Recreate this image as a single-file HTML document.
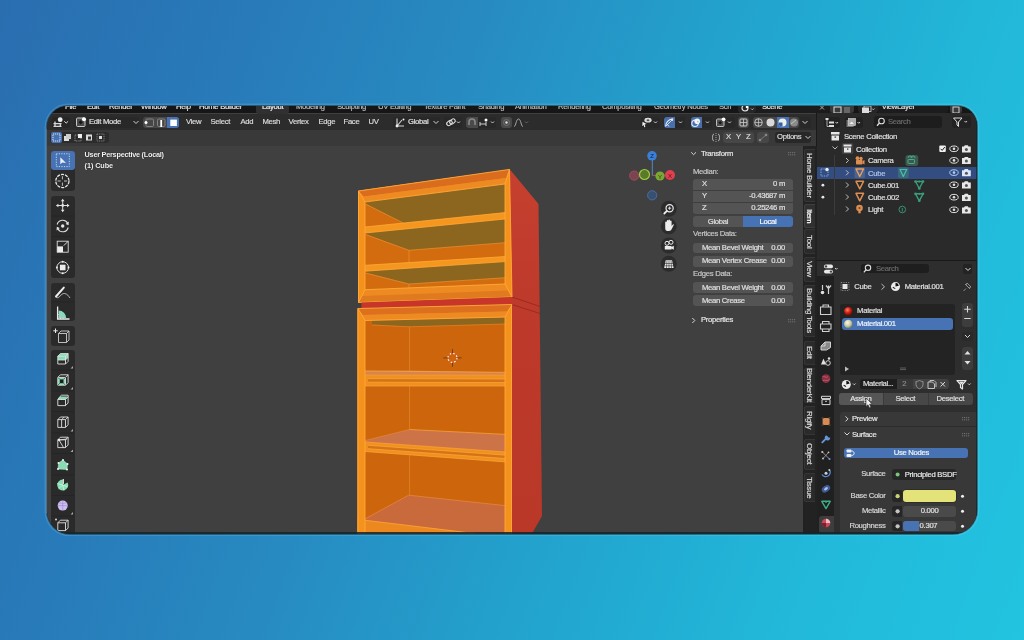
<!DOCTYPE html>
<html><head><meta charset="utf-8">
<style>
*{margin:0;padding:0;box-sizing:border-box}
html,body{width:1024px;height:640px;overflow:hidden}
body{background:linear-gradient(110deg,#2a6eb0 0%,#287ab8 20%,#278cc2 40%,#22a4ce 60%,#22b8da 80%,#22c4e0 100%);font-family:"Liberation Sans",sans-serif;color:#d8d8d8;position:relative}
#win{position:absolute;left:47px;top:106px;width:930px;height:427.5px;border-radius:21px 20px 24px 23px;overflow:hidden;background:#1a1a1a;box-shadow:0 0 0 1px rgba(8,24,32,.45),0 0 0 2.5px rgba(150,215,245,.2);will-change:transform}
#in{position:absolute;left:-47px;top:-106px;width:1024px;height:640px}
.a{position:absolute}
.vt{position:absolute;writing-mode:vertical-rl;font-size:7.9px;line-height:11px;text-align:center;color:#d8d8d8;white-space:nowrap;letter-spacing:-0.25px;-webkit-text-stroke:0.2px currentColor}
.t{position:absolute;white-space:nowrap;font-size:7.7px;line-height:10px;letter-spacing:-0.3px;-webkit-text-stroke:0.18px currentColor}
</style></head><body>
<div class="a" style="left:46px;top:129px;width:1.2px;height:384px;background:rgba(190,215,240,.6)"></div>
<div id="win"><div id="in">
  <!-- menu bar -->
  <div class="a" style="left:0;top:0;width:1024px;height:114px;background:#161616"></div>
  <!-- viewport -->
  <div class="a" style="left:47px;top:113px;width:769px;height:421px;background:#404040"></div>
  <div class="a" style="left:47px;top:114px;width:769px;height:16px;background:#2c2c2c"></div>
  <div class="a" style="left:47px;top:130px;width:769px;height:16px;background:#393939"></div>
<svg class="a" style="left:0;top:0" width="1024" height="640" viewBox="0 0 1024 640">
 <!-- red side -->
 <defs><linearGradient id="redg" x1="0" y1="169" x2="0" y2="533" gradientUnits="userSpaceOnUse"><stop offset="0" stop-color="#c6402f"/><stop offset="0.35" stop-color="#be3a2b"/><stop offset="1" stop-color="#b93828"/></linearGradient></defs>
 <polygon points="509.5,169 538.5,204 542,516 532,533.5 511,533.5 511,296" fill="url(#redg)"/>
 <path d="M512 297 L540 306.5 M512 304.5 L540 313.5" stroke="#962820" stroke-width="0.9"/>
 <!-- ===== upper box ===== -->
 <polygon points="358,190.8 509.5,169.4 512,297 358,302.5" fill="#f08c1e"/>
 <!-- top board face -->
 <polygon points="358,190.8 509.5,169.4 506,178 364,196.5" fill="#da6c1e"/>
 <polygon points="364,196.5 506,178 505,184 365,202" fill="#ee8a22"/>
 <!-- interior -->
 <polygon points="365,202 505,184 505,284 365,290" fill="#d26c0e"/>
 <polygon points="365,202 505,184 505,213 404,223.4 365,203.5" fill="#8c661e"/>
 <polygon points="365,232.8 505,218.6 505,242.7 409,250.3 365,234" fill="#8c661e"/>
 <polygon points="365,271 505,261 505,277.7 409,284 365,272.5" fill="#8c661e"/>
 <path d="M365.5 204 L404 223.4 M365.5 234.5 L409 250.3 L505 242.7 M365.5 273 L409 284 L505 277.7 M409 250.3 V266 M409 284 V289" stroke="#eb9030" stroke-width="0.7" fill="none"/>
 <!-- shelves -->
 <polygon points="365,227 505,212.6 505,219 365,233" fill="#f5961e"/>
 <polygon points="365,265.3 505,256.6 505,261.6 365,271.2" fill="#f5961e"/>
 <path d="M365 227 L505 212.6 M365 233 L505 219 M365 265.3 L505 256.6 M365 271.2 L505 261.6" stroke="#ffa838" stroke-width="0.8"/>
 <!-- bottom board -->
 <polygon points="365,289.7 505,284 512,297 358,302.5" fill="#ee8a22"/>
 <polygon points="362,296 508,290.5 512,297 358,302.5" fill="#e07a1e"/>
 <!-- posts -->
 <polygon points="358,190.8 365,202 365,290 358,302.5" fill="#f5921e"/>
 <polygon points="505,184 509.5,169.4 512,297 505,284" fill="#f5921e"/>
 <path d="M358.5 191 L509.5 169.4 L512 297 L358.5 302.5 Z M365 202 L505 184 L505 284 L365 289.7 Z M358.5 191 L365 202 M509.5 169.4 L505 184 M505 284 L512 297 M365 289.7 L358.5 302.5" stroke="#ffa838" stroke-width="0.9" fill="none"/>
 <!-- red strip -->
 <polygon points="361.4,302.5 512,297 512,304.5 361.4,308.3" fill="#c8362a"/>
 <!-- ===== lower box ===== -->
 <polygon points="357.5,308.5 512,304.5 512,533.5 357.5,533.5" fill="#f08c1e"/>
 <polygon points="365,320.5 505,317 505,533.5 365,533.5" fill="#cc650c"/>
 <polygon points="357.5,308.5 512,304.5 507,311.5 363,315" fill="#dc701e"/>
 <polygon points="363,315 507,311.5 505,317 365,320.5" fill="#ee8a22"/>
 <polygon points="372,320.8 505,317.5 505,323.7 409,326.5 372,324.5" fill="#8c661e"/>
 <path d="M372 325 L409 326.8 L505 324" stroke="#e88a2c" stroke-width="0.6" fill="none"/>
 <path d="M409.6 327 V533.5" stroke="#e6882a" stroke-width="0.7"/>
 <!-- shelf 1 -->
 <polygon points="365,370.8 409.6,370.6 505,372.2 505,375.2 365,375.2" fill="#d8844a"/>
 <polygon points="365,375.2 505,375.2 505,386 365,386" fill="#f0901e"/>
 <polygon points="368,378.6 505,379 505,382.6 368,382.2" fill="#d47416"/>
 <path d="M365 371 L505 372.3 M365 375.2 H505 M368 378.6 L505 379 M368 382.2 L505 382.6 M365 386 H505" stroke="#ffa838" stroke-width="0.7" fill="none"/>
 <!-- shelf 2 -->
 <polygon points="365,440.5 409.6,429.5 506,434.4 506,452 365,442" fill="#cc7448"/>
 <polygon points="365,442 506,452 506,462 365,451.5" fill="#f0901e"/>
 <polygon points="368,445.3 506,455.2 506,458.6 368,448.7" fill="#d47416"/>
 <path d="M409.6 429.5 L506 434.4 M365 442 L506 452 M368 445.3 L506 455.2 M368 448.7 L506 458.6 M365 451.5 L506 462" stroke="#ffa838" stroke-width="0.7" fill="none"/>
 <path d="M365 440.5 L409.6 429.5" stroke="#e88a40" stroke-width="0.6"/>
 <!-- floor -->
 <polygon points="363,520 408.6,495.2 506,505.7 506,533.5 470,533.5" fill="#c96a3c"/>
 <path d="M363 520 L408.6 495.2 L506 505.7" stroke="#e88a44" stroke-width="0.7" fill="none"/>
 <polygon points="357.5,518 363,520 475,533.5 357.5,533.5" fill="#ec8820"/>
 <path d="M363 520 L475 533.5" stroke="#ffa838" stroke-width="0.8"/>
 <!-- posts -->
 <polygon points="357.5,308.5 365,320.5 365,533.5 357.5,533.5" fill="#f5921e"/>
 <polygon points="505,317 512,304.5 512,533.5 505,533.5" fill="#f5921e"/>
 <path d="M358 308.5 L512 304.5 M358 308.5 V533.5 M365 320.5 L505 317 M365 320.5 V533.5 M505 317 V533.5 M511.5 304.5 V533.5 M358 308.5 L365 320.5 M512 304.5 L505 317" stroke="#ffa838" stroke-width="0.9" fill="none"/>
 <!-- cursor -->
 <circle cx="452.5" cy="357.9" r="4.5" fill="none" stroke="#fff" stroke-width="1.1" stroke-dasharray="2 1.55"/>
 <circle cx="452.5" cy="357.9" r="4.5" fill="none" stroke="#e04a3a" stroke-width="1.1" stroke-dasharray="1.55 2" stroke-dashoffset="2"/>
 <path d="M443.5 357.9 H447.5 M457.5 357.9 H461.5 M452.5 349 V353 M452.5 362.8 V366.8" stroke="#3a2a20" stroke-width="0.6"/>
</svg>

  <!-- menu bar text -->
  <div class="t" style="left:65px;top:102.2px;color:#e8e8e8">File</div>
  <div class="t" style="left:87px;top:102.2px;color:#e8e8e8">Edit</div>
  <div class="t" style="left:109px;top:102.2px;color:#e8e8e8">Render</div>
  <div class="t" style="left:141px;top:102.2px;color:#e8e8e8">Window</div>
  <div class="t" style="left:176px;top:102.2px;color:#e8e8e8">Help</div>
  <div class="t" style="left:199px;top:102.2px;color:#e8e8e8">Home Builder</div>
  <div class="a" style="left:256px;top:104px;width:33px;height:10px;background:#303030;border-radius:3px"></div>
  <div class="t" style="left:262px;top:102.2px;color:#f0f0f0">Layout</div>
  <div class="t" style="left:296px;top:102.2px;color:#bdbdbd">Modeling</div>
  <div class="t" style="left:337px;top:102.2px;color:#bdbdbd">Sculpting</div>
  <div class="t" style="left:378px;top:102.2px;color:#bdbdbd">UV Editing</div>
  <div class="t" style="left:424px;top:102.2px;color:#bdbdbd">Texture Paint</div>
  <div class="t" style="left:478px;top:102.2px;color:#bdbdbd">Shading</div>
  <div class="t" style="left:515px;top:102.2px;color:#bdbdbd">Animation</div>
  <div class="t" style="left:558px;top:102.2px;color:#bdbdbd">Rendering</div>
  <div class="t" style="left:602px;top:102.2px;color:#bdbdbd">Compositing</div>
  <div class="t" style="left:654px;top:102.2px;color:#bdbdbd">Geometry Nodes</div>
  <div class="t" style="left:719px;top:102.2px;color:#bdbdbd">Scri</div>
  <div class="a" style="left:738px;top:103px;width:18px;height:10px;background:#262626;border-radius:3px"></div>
  <div class="a" style="left:756px;top:103px;width:80px;height:10px;background:#1c1c1c;border-radius:0 3px 3px 0"></div>
  <svg class="a" style="left:738px;top:103px" width="20" height="11" viewBox="0 0 20 11"><circle cx="7" cy="5" r="3" fill="none" stroke="#e8e8e8" stroke-width="1.2"/><circle cx="9" cy="4" r="1.3" fill="#fff"/><path d="M13 5.5 L14.3 6.8 L15.6 5.5" stroke="#ccc" fill="none" stroke-width="0.9"/></svg>
  <div class="t" style="left:762px;top:102.2px;color:#e8e8e8">Scene</div>
  <svg class="a" style="left:819px;top:104px" width="6" height="7" viewBox="0 0 6 7"><path d="M1 1.5 L5 5.5 M5 1.5 L1 5.5" stroke="#bbb" stroke-width="0.9"/></svg>
  <div class="a" style="left:830px;top:103px;width:24px;height:10px;background:#3a3a3a;border-radius:3px"></div>
  <svg class="a" style="left:830px;top:103px" width="24" height="11" viewBox="0 0 24 11"><rect x="4" y="4" width="7" height="6" fill="none" stroke="#ddd" stroke-width="1"/><rect x="14" y="4" width="6" height="6" fill="#666"/></svg>
  <div class="a" style="left:858px;top:103px;width:20px;height:10px;background:#262626;border-radius:3px"></div>
  <div class="a" style="left:878px;top:103px;width:70px;height:10px;background:#1c1c1c;border-radius:0 3px 3px 0"></div>
  <svg class="a" style="left:858px;top:103px" width="20" height="11" viewBox="0 0 20 11"><rect x="4" y="4.5" width="7" height="5.5" fill="#ddd"/><rect x="6" y="3" width="7" height="5.5" fill="none" stroke="#ddd" stroke-width="0.8"/><path d="M14 5.5 L15.3 6.8 L16.6 5.5" stroke="#ccc" fill="none" stroke-width="0.9"/></svg>
  <div class="t" style="left:881.7px;top:102.2px;color:#e8e8e8">ViewLayer</div>
  <div class="a" style="left:950px;top:103px;width:12px;height:10px;background:#3a3a3a;border-radius:2px"></div>
  <svg class="a" style="left:950px;top:103px" width="12" height="11" viewBox="0 0 12 11"><rect x="3" y="4" width="6" height="6" fill="none" stroke="#ddd" stroke-width="0.9"/></svg>

  <!-- viewport header -->
  <div class="a" style="left:52px;top:117px;width:18px;height:11px;background:#262626;border-radius:3px"></div>
  <svg class="a" style="left:50px;top:114px" width="20" height="16" viewBox="50 114 20 16">
    <circle cx="60.2" cy="119.7" r="2.4" fill="#eee"/><path d="M53.5 123.6 H61.5 M53.5 126.3 H61.5 M55 121.5 V127 M60.3 123 V127" stroke="#d8d8d8" stroke-width="1.3"/>
    <path d="M64.3 121.3 L66.2 123.1 L68.1 121.3" stroke="#ddd" fill="none" stroke-width="1"/></svg>
  <div class="a" style="left:74px;top:117px;width:65px;height:11px;background:#282828;border-radius:3px"></div>
  <svg class="a" style="left:75px;top:114px" width="14" height="16" viewBox="75 114 14 16">
    <rect x="76.5" y="118" width="8.5" height="8.5" rx="1" fill="#4a4a4a" stroke="#c8c8c8" stroke-width="1"/><path d="M80.7 120.2 L82.8 122.3 L80.7 124.4 L78.6 122.3 Z" fill="#161616"/><circle cx="84" cy="119.3" r="2" fill="#fff"/></svg>
  <div class="t" style="left:89px;top:117px;color:#e0e0e0">Edit Mode</div>
  <svg class="a" style="left:133px;top:120px" width="6" height="5" viewBox="0 0 6 5"><path d="M0.5 1 L3 3.5 L5.5 1" stroke="#d0d0d0" fill="none" stroke-width="1"/></svg>
  <div class="a" style="left:143px;top:117px;width:36px;height:11px;background:#474747;border-radius:3px"></div>
  <div class="a" style="left:167px;top:117px;width:12px;height:11px;background:#4772b3;border-radius:0 3px 3px 0"></div>
  <svg class="a" style="left:143px;top:117px" width="36" height="11" viewBox="0 0 36 11">
    <rect x="3" y="2" width="7.5" height="7.5" rx="1.2" fill="none" stroke="#8a8a8a" stroke-width="0.9"/><circle cx="3" cy="5.5" r="1.5" fill="#fff"/>
    <rect x="14.5" y="2" width="7.5" height="7.5" rx="1.2" fill="none" stroke="#8a8a8a" stroke-width="0.9"/><rect x="17.3" y="3" width="1.8" height="7" fill="#fff"/>
    <rect x="27.3" y="2.6" width="6.6" height="6.4" fill="#fff"/></svg>
  <div class="t" style="left:186px;top:117px;color:#dcdcdc">View</div>
  <div class="t" style="left:210.5px;top:117px;color:#dcdcdc">Select</div>
  <div class="t" style="left:240.5px;top:117px;color:#dcdcdc">Add</div>
  <div class="t" style="left:262.5px;top:117px;color:#dcdcdc">Mesh</div>
  <div class="t" style="left:288.5px;top:117px;color:#dcdcdc">Vertex</div>
  <div class="t" style="left:318.5px;top:117px;color:#dcdcdc">Edge</div>
  <div class="t" style="left:343.5px;top:117px;color:#dcdcdc">Face</div>
  <div class="t" style="left:368.5px;top:117px;color:#dcdcdc">UV</div>
  <div class="a" style="left:393px;top:117px;width:47px;height:11px;background:#282828;border-radius:3px"></div>
  <svg class="a" style="left:395px;top:117px" width="10" height="11" viewBox="0 0 10 11">
    <path d="M2 1.5 L2 9 L9 9 M2 9 L7 3" stroke="#d8d8d8" stroke-width="1.1" fill="none"/><circle cx="2" cy="9" r="1.4" fill="#eee"/><circle cx="8.5" cy="2.5" r="1" fill="#eee"/></svg>
  <div class="t" style="left:408px;top:117px;color:#e0e0e0">Global</div>
  <svg class="a" style="left:433px;top:120px" width="6" height="5" viewBox="0 0 6 5"><path d="M0.5 1 L3 3.5 L5.5 1" stroke="#d0d0d0" fill="none" stroke-width="1"/></svg>
  <div class="a" style="left:444px;top:117px;width:18px;height:11px;background:#282828;border-radius:3px"></div>
  <svg class="a" style="left:445px;top:117px" width="17" height="11" viewBox="0 0 17 11">
    <rect x="1.5" y="4" width="6" height="4" rx="2" transform="rotate(-40 4.5 6)" fill="none" stroke="#ddd" stroke-width="1.1"/><rect x="4.5" y="2.5" width="6" height="4" rx="2" transform="rotate(-40 7.5 4.5)" fill="none" stroke="#ddd" stroke-width="1.1"/>
    <path d="M12 4.5 L13.5 6 L15 4.5" stroke="#d0d0d0" fill="none" stroke-width="1"/></svg>
  <div class="a" style="left:466px;top:117px;width:30px;height:11px;background:#282828;border-radius:3px"></div>
  <div class="a" style="left:466px;top:117px;width:12px;height:11px;background:#4a4a4a;border-radius:3px 0 0 3px"></div>
  <svg class="a" style="left:466px;top:117px" width="30" height="11" viewBox="0 0 30 11">
    <path d="M3 8 L3 5 A3 3 0 0 1 9 5 L9 8" stroke="#8a8a8a" stroke-width="1.6" fill="none"/>
    <path d="M14 5 L14 9 M20 5 L20 9 M14 7 L20 7" stroke="#cfcfcf" stroke-width="1"/><circle cx="20" cy="3" r="1.5" fill="#fff"/>
    <path d="M25 4.5 L26.5 6 L28 4.5" stroke="#d0d0d0" fill="none" stroke-width="1"/></svg>
  <div class="a" style="left:501px;top:117px;width:11px;height:11px;background:#4a4a4a;border-radius:3px"></div>
  <svg class="a" style="left:501px;top:117px" width="30" height="11" viewBox="0 0 30 11">
    <circle cx="5.5" cy="5.5" r="3" fill="none" stroke="#777" stroke-width="0.8"/><circle cx="5.5" cy="5.5" r="1.2" fill="#ddd"/>
    <path d="M13 9.5 C15 9.5 15 2 17.5 2 C20 2 20 9.5 22 9.5" stroke="#a8a8a8" stroke-width="1" fill="none"/>
    <path d="M24 4.5 L25.5 6 L27 4.5" stroke="#666" fill="none" stroke-width="1"/></svg>
  <!-- right header icons -->
  <div class="a" style="left:641px;top:117px;width:19px;height:11px;background:#282828;border-radius:3px"></div>
  <svg class="a" style="left:641px;top:117px" width="19" height="11" viewBox="0 0 19 11">
    <ellipse cx="7" cy="3.2" rx="3.6" ry="2.4" fill="#ddd"/><ellipse cx="7" cy="3.2" rx="1.5" ry="1" fill="#555"/><path d="M1.5 4.8 L5.5 7 L3.6 7.6 L4.4 10 L3.3 10.3 L2.6 8 L1.3 9.2 Z" fill="#f0f0f0"/>
    <path d="M13 4.5 L14.5 6 L16 4.5" stroke="#d0d0d0" fill="none" stroke-width="1"/></svg>
  <div class="a" style="left:663px;top:117px;width:22px;height:11px;background:#282828;border-radius:3px"></div>
  <div class="a" style="left:663.5px;top:117px;width:11.5px;height:11px;background:#4a70ac;border-radius:3px 0 0 3px"></div>
  <svg class="a" style="left:663px;top:117px" width="22" height="11" viewBox="0 0 22 11">
    <path d="M2.5 9.5 C3 5 6 2.5 9.5 2" stroke="#e8eef8" stroke-width="1.1" fill="none"/><path d="M3 9 L9.5 2.5" stroke="#dce6f4" stroke-width="0.9"/><path d="M10.2 1.2 L10 4.3 L7.3 2.2 Z" fill="#eef"/><path d="M3.5 6.5 L6 9.5" stroke="#e8eef8" stroke-width="0.9"/>
    <path d="M16 4.5 L17.5 6 L19 4.5" stroke="#d0d0d0" fill="none" stroke-width="1"/></svg>
  <div class="a" style="left:690px;top:117px;width:22px;height:11px;background:#282828;border-radius:3px"></div>
  <div class="a" style="left:690.5px;top:117px;width:11.5px;height:11px;background:#4a70ac;border-radius:3px 0 0 3px"></div>
  <svg class="a" style="left:690px;top:117px" width="22" height="11" viewBox="0 0 22 11">
    <circle cx="5" cy="6.3" r="3.2" fill="none" stroke="#dde6f4" stroke-width="1.2"/><circle cx="7.2" cy="4.3" r="2.8" fill="#f4f6fa"/><circle cx="7.8" cy="4.6" r="0.9" fill="#b8c0d0"/>
    <path d="M16 4.5 L17.5 6 L19 4.5" stroke="#d0d0d0" fill="none" stroke-width="1"/></svg>
  <div class="a" style="left:715px;top:117px;width:20px;height:11px;background:#282828;border-radius:3px"></div>
  <svg class="a" style="left:715px;top:117px" width="20" height="11" viewBox="0 0 20 11">
    <rect x="1.5" y="2" width="7.5" height="7.5" rx="1" fill="#505050" stroke="#bdbdbd" stroke-width="1"/><path d="M5.2 4 L7 5.8 L5.2 7.6 L3.4 5.8 Z" fill="#161616"/><circle cx="8.6" cy="2.3" r="1.9" fill="#fff"/>
    <path d="M13 4.5 L14.5 6 L16 4.5" stroke="#d0d0d0" fill="none" stroke-width="1"/></svg>
  <div class="a" style="left:738px;top:117px;width:11px;height:11px;background:#474747;border-radius:3px"></div>
  <svg class="a" style="left:738px;top:117px" width="11" height="11" viewBox="0 0 11 11">
    <rect x="2" y="2" width="7" height="7" rx="1" fill="none" stroke="#ccc" stroke-width="1"/><path d="M5.5 2 L5.5 9 M2 5.5 L9 5.5" stroke="#ccc" stroke-width="0.8"/></svg>
  <div class="a" style="left:753px;top:117px;width:46px;height:11px;background:#474747;border-radius:3px"></div>
  <div class="a" style="left:777px;top:117px;width:12px;height:11px;background:#4772b3"></div>
  <svg class="a" style="left:753px;top:117px" width="46" height="11" viewBox="0 0 46 11">
    <circle cx="5.5" cy="5.5" r="3.8" fill="none" stroke="#ccc" stroke-width="0.9"/><path d="M5.5 1.7 L5.5 9.3 M1.7 5.5 L9.3 5.5" stroke="#ccc" stroke-width="0.7"/>
    <circle cx="17.5" cy="5.5" r="4" fill="#d8d8d8"/>
    <circle cx="29.5" cy="5.5" r="4" fill="#eee"/><path d="M29.5 5.5 L29.5 9.5 A4 4 0 0 1 25.5 5.5 Z" fill="#3360a0"/>
    <circle cx="41" cy="5.5" r="4" fill="#8a8a8a"/><path d="M38 7 L43 3" stroke="#cfcfcf" stroke-width="0.8"/></svg>
  <div class="a" style="left:800px;top:117px;width:11px;height:11px;background:#282828;border-radius:3px"></div>
  <svg class="a" style="left:802px;top:120px" width="6" height="5" viewBox="0 0 6 5"><path d="M0.5 1 L3 3.5 L5.5 1" stroke="#d0d0d0" fill="none" stroke-width="1"/></svg>

  <!-- tool settings row -->
  <div class="a" style="left:50px;top:132px;width:59px;height:11px;background:#2c2c2c;border-radius:3px"></div>
  <div class="a" style="left:51px;top:132.3px;width:11.2px;height:10.9px;background:#4772b3;border-radius:2px"></div>
  <svg class="a" style="left:51px;top:132px" width="58" height="11" viewBox="0 0 58 11">
    <rect x="2" y="2" width="7" height="7" fill="none" stroke="#eee" stroke-width="0.9" stroke-dasharray="1.2 0.8"/>
    <rect x="13" y="4" width="5" height="5" fill="#ddd"/><rect x="15" y="2" width="5" height="5" fill="#ccc"/>
    <rect x="24" y="3" width="6" height="6" fill="none" stroke="#aaa" stroke-width="0.8" stroke-dasharray="1 0.8"/><rect x="27" y="2" width="4" height="4" fill="#eee"/>
    <rect x="35" y="2.5" width="6" height="6" fill="#ddd"/><rect x="37" y="4.5" width="3" height="3" fill="#333"/>
    <rect x="46" y="2" width="7" height="7" fill="none" stroke="#999" stroke-width="0.8" stroke-dasharray="1 0.8"/><rect x="48" y="4" width="3" height="3" fill="#ddd"/></svg>
  <svg class="a" style="left:711px;top:132px" width="10" height="11" viewBox="0 0 10 11">
    <path d="M3 2 C1 2 1 9 3 9 M7 2 C9 2 9 9 7 9" stroke="#bbb" fill="none" stroke-width="1"/><path d="M5 1 L5 10" stroke="#bbb" stroke-width="0.8" stroke-dasharray="1 1"/></svg>
  <div class="a" style="left:722.5px;top:132px;width:31px;height:11px;background:#474747;border-radius:3px"></div>
  <div class="t" style="left:726px;top:132px;color:#dcdcdc">X</div>
  <div class="t" style="left:736px;top:132px;color:#dcdcdc">Y</div>
  <div class="t" style="left:746px;top:132px;color:#dcdcdc">Z</div>
  <div class="a" style="left:757px;top:132px;width:12px;height:11px;background:#474747;border-radius:3px"></div>
  <svg class="a" style="left:757px;top:132px" width="12" height="11" viewBox="0 0 12 11"><path d="M3 8 L9 3" stroke="#777" stroke-width="1"/><circle cx="3" cy="8" r="1.3" fill="#888"/><circle cx="9" cy="3" r="1.3" fill="#888"/></svg>
  <div class="a" style="left:775px;top:132px;width:36px;height:11px;background:#282828;border-radius:3px"></div>
  <div class="t" style="left:777px;top:132px;color:#dcdcdc">Options</div>
  <svg class="a" style="left:805px;top:135px" width="6" height="5" viewBox="0 0 6 5"><path d="M0.5 1 L3 3.5 L5.5 1" stroke="#d0d0d0" fill="none" stroke-width="1"/></svg>

  <!-- left toolbar -->
  <div class="a" style="left:50.75px;top:150.7px;width:23.75px;height:40px;background:#2a2a2a;border-radius:3px"></div>
  <div class="a" style="left:50.75px;top:150.7px;width:23.75px;height:19.8px;background:#4772b3;border-radius:3px"></div>
  <div class="a" style="left:50.75px;top:195.5px;width:23.75px;height:82.5px;background:#2a2a2a;border-radius:3px"></div>
  <div class="a" style="left:50.75px;top:282.5px;width:23.75px;height:38.5px;background:#2a2a2a;border-radius:3px"></div>
  <div class="a" style="left:50.75px;top:326px;width:23.75px;height:20px;background:#2a2a2a;border-radius:3px"></div>
  <div class="a" style="left:50.75px;top:349.5px;width:23.75px;height:190px;background:#2a2a2a;border-radius:3px"></div>
  <svg class="a" style="left:50px;top:145px" width="26" height="395" viewBox="50 145 26 395">
   <g fill="none" stroke="#dcdcdc" stroke-width="1.1">
    <!-- select box -->
    <rect x="56.3" y="153.8" width="13" height="12.8" stroke-dasharray="1.2 1.3" stroke="#c8d4ec" stroke-width="1"/>
    <path d="M60.3 157.2 L60.3 164.3 L62.3 162.4 L66 163 Z" fill="#eaf0fa" stroke="none"/>
    <!-- cursor -->
    <circle cx="62.4" cy="181" r="6.6" stroke-dasharray="3.2 1" stroke-width="1.3" stroke="#e4e4e4"/>
    <path d="M62.4 176.2 V179.4 M62.4 182.6 V185.8 M57.6 181 H60.8 M64 181 H67.2" stroke-width="0.9" stroke="#cfcfcf"/>
    <!-- move -->
    <path d="M62.7 200 V211 M57.2 205.5 H68.2" stroke-width="1"/>
    <path d="M62.7 198.7 L60.9 201.2 H64.5 Z M62.7 212.3 L60.9 209.8 H64.5 Z M55.9 205.5 L58.4 203.7 V207.3 Z M69.5 205.5 L67 203.7 V207.3 Z" fill="#e4e4e4" stroke="none"/>
    <circle cx="62.7" cy="205.5" r="1.4" fill="#e4e4e4" stroke="none"/>
    <!-- rotate -->
    <path d="M57.2 224.5 A5.6 5.6 0 0 1 67.6 223.2 M68.2 227.5 A5.6 5.6 0 0 1 57.8 228.8"/>
    <circle cx="62.7" cy="226" r="1.7" fill="#e4e4e4" stroke="none"/>
    <path d="M68.8 221.6 L68.6 225.3 L65.6 224 Z M56.6 230.4 L56.8 226.7 L59.8 228 Z" fill="#e4e4e4" stroke="none"/>
    <!-- scale -->
    <rect x="57.2" y="241.2" width="11" height="11" stroke-width="0.9"/>
    <rect x="57.2" y="246.4" width="5.8" height="5.8" fill="#ececec" stroke="none"/>
    <path d="M63.8 245.6 L68 241.4" stroke-width="1"/>
    <!-- transform -->
    <circle cx="62.7" cy="267.5" r="5.8" stroke-width="1"/>
    <rect x="59.9" y="264.7" width="5.6" height="5.6" fill="#ececec" stroke="none"/>
    <circle cx="62.7" cy="261.7" r="1" fill="#ececec" stroke="none"/><circle cx="62.7" cy="273.3" r="1" fill="#ececec" stroke="none"/><circle cx="56.9" cy="267.5" r="1" fill="#ececec" stroke="none"/><circle cx="68.5" cy="267.5" r="1" fill="#ececec" stroke="none"/>
    <!-- annotate -->
    <path d="M56 296.5 L63.8 287.6" stroke="#ececec" stroke-width="2" stroke-linecap="round"/>
    <path d="M56.2 297.3 C59 299.5 61 293 64.5 293.5 C67.5 294 68.5 296 70 298" stroke-width="0.8" stroke="#d8d8d8"/>
    <!-- measure -->
    <path d="M57.6 306.5 V319 H69.5" stroke-width="1.3" stroke="#ececec"/>
    <path d="M58.6 318 V310.5 A7.5 7.5 0 0 1 66.2 318 Z" fill="#8cd8bc" stroke="none"/>
    <path d="M57.6 317 H59 M57.6 314.5 H59 M60.5 319 V317.7 M63 319 V317.7" stroke="#ececec" stroke-width="0.6"/>
    <!-- add cube -->
    <path d="M58.5 333.5 H66.5 V342.5 H58.5 Z M58.5 333.5 L61 331 H69 L66.5 333.5 M69 331 V340 L66.5 342.5" stroke-width="0.85" stroke="#d8d8d8" stroke-linejoin="round"/>
    <path d="M55.5 328.5 V333 M53.3 330.8 H57.7" stroke-width="1" stroke="#ececec"/>
   </g>
  </svg>
<svg class="a" style="left:50px;top:345px" width="26" height="190" viewBox="50 345 26 190"><path d="M57.8 356.2 L60.4 353.59999999999997 H68.1 V357.4 L65.5 360.0 H57.8 Z" fill="#86dcb4"/><path d="M57.8 356.2 H65.5 V364.0 H57.8 Z M57.8 356.2 L60.4 353.59999999999997 H68.1 L65.5 356.2 M68.1 353.59999999999997 V361.4 L65.5 364.0" stroke="#e0e0e0" stroke-width="0.9" fill="none" stroke-linejoin="round"/><path d="M57.8 360.0 H65.5 L68.1 357.4" stroke="#e0e0e0" stroke-width="0.8" fill="none"/><rect x="57.8" y="377.40000000000003" width="7.7" height="7.8" fill="#86dcb4"/><rect x="59.8" y="379.40000000000003" width="3.7" height="3.8" fill="#1e1e1e"/><path d="M57.8 377.40000000000003 H65.5 V385.20000000000005 H57.8 Z M57.8 377.40000000000003 L60.4 374.8 H68.1 L65.5 377.40000000000003 M68.1 374.8 V382.6 L65.5 385.20000000000005" stroke="#e0e0e0" stroke-width="0.9" fill="none" stroke-linejoin="round"/><path d="M57.8 377.40000000000003 L59.8 379.40000000000003 M65.5 377.40000000000003 L63.5 379.40000000000003 M57.8 385.20000000000005 L59.8 383.20000000000005 M65.5 385.20000000000005 L63.5 383.20000000000005" stroke="#222" stroke-width="0.6"/><path d="M57.8 399.5 L60 396.5 H67.5 L65.5 399.5 Z" fill="#86dcb4"/><path d="M57.8 399.5 V405.6 H65.5 V399.5 M57.8 399.5 L60 396.5 L61.5 395.2 H68.1 V403 L65.5 405.6 M65.5 399.5 L68.1 396.8 M57.8 399.5 H65.5" stroke="#e0e0e0" stroke-width="0.9" fill="none" stroke-linejoin="round"/><path d="M57.8 419.6 H65.5 V427.40000000000003 H57.8 Z M57.8 419.6 L60.4 417.0 H68.1 L65.5 419.6 M68.1 417.0 V424.8 L65.5 427.40000000000003" stroke="#e0e0e0" stroke-width="0.9" fill="none" stroke-linejoin="round"/><path d="M61.6 419.6 V427.40000000000003 M61.6 419.6 L64.2 417.0" stroke="#e0e0e0" stroke-width="0.9"/><path d="M57.8 439.8 H65.5 V447.6 H57.8 Z M57.8 439.8 L60.4 437.2 H68.1 L65.5 439.8 M68.1 437.2 V445.0 L65.5 447.6" stroke="#e0e0e0" stroke-width="0.9" fill="none" stroke-linejoin="round"/><path d="M59 440 L63.5 447.5 M59 440 L67 439" stroke="#e0e0e0" stroke-width="0.9"/><circle cx="59" cy="440" r="0.9" fill="#fff"/><path d="M58 469 L58.5 463 L63 460 L67.5 464 L67 469.5 Z" fill="#86dcb4" stroke="#bfeedd" stroke-width="0.5"/><g fill="#f4f4f4"><circle cx="58" cy="469" r="1"/><circle cx="58.5" cy="463" r="1"/><circle cx="63" cy="460" r="1"/><circle cx="67.5" cy="464" r="1"/><circle cx="67" cy="469.5" r="1"/></g><path d="M62.7 485 L67.6 482.5 A5.5 5.5 0 1 1 62.7 479.5 Z" fill="#86dcb4"/><path d="M62.7 485 L62.7 479.5 M62.7 485 L57.3 483.5 M62.7 485 L58.5 488.8 M62.7 485 L64 490.3 M62.7 485 L67.8 487" stroke="#e8fff4" stroke-width="0.6"/><path d="M63.5 479 L63.5 484" stroke="#fff" stroke-width="0.8"/><circle cx="62.7" cy="505.6" r="5" fill="#cdbdf0"/><path d="M57.7 505.6 H67.7 M62.7 500.6 V510.6 M58.5 502.8 Q62.7 504.1 66.9 502.8" stroke="#9a88c8" stroke-width="0.6" fill="none"/><path d="M57.8 522.8 H65.5 V530.6 H57.8 Z M57.8 522.8 L60.4 520.1999999999999 H68.1 L65.5 522.8 M68.1 520.1999999999999 V528.0 L65.5 530.6" stroke="#e0e0e0" stroke-width="0.9" fill="none" stroke-linejoin="round"/><circle cx="56" cy="519.5" r="1" fill="#ddd"/><g fill="#aaa"><path d="M73 368.5 V366 L70.5 368.5 Z M73 389.5 V387 L70.5 389.5 Z M73 431.5 V429 L70.5 431.5 Z M73 452 V449.5 L70.5 452 Z M73 514.5 V512 L70.5 514.5 Z"/></g><path d="M51.5 370 H74 M51.5 391 H74 M51.5 411.5 H74 M51.5 433 H74 M51.5 453.5 H74 M51.5 475 H74 M51.5 495.5 H74 M51.5 516 H74" stroke="#242424" stroke-width="0.8"/></svg>
  <svg class="a" style="left:50px;top:190px" width="26" height="130" viewBox="50 190 26 130"><path d="M51.5 216 H74 M51.5 236.5 H74 M51.5 257 H74 M51.5 302 H74" stroke="#242424" stroke-width="0.8"/></svg>
  <!-- viewport text -->
  <div class="t" style="left:84.6px;top:150.3px;color:#f4f4f4;text-shadow:0 0 1px #000;-webkit-text-stroke:0;font-weight:bold;font-size:7.3px;letter-spacing:-0.25px">User Perspective (Local)</div>
  <div class="t" style="left:84.6px;top:161px;color:#f4f4f4;text-shadow:0 0 1px #000;-webkit-text-stroke:0;font-weight:bold;font-size:7.3px;letter-spacing:-0.1px">(1) Cube</div>

  <!-- N panel -->
  
  <div class="a" style="left:803px;top:146px;width:14px;height:388px;background:#222"></div>
  <!-- gizmo -->
  <svg class="a" style="left:620px;top:140px" width="70" height="140" viewBox="620 140 70 140">
    <line x1="652.3" y1="156" x2="652.3" y2="175.5" stroke="#5a90d0" stroke-width="0.9"/>
    <line x1="652.3" y1="175.5" x2="670" y2="175" stroke="#c05060" stroke-width="0.9"/>
    
    <circle cx="634.2" cy="175.6" r="4.6" fill="#7a4450" stroke="#a84a5c" stroke-width="0.9"/>
    <circle cx="652.2" cy="195.3" r="4.6" fill="#385070" stroke="#4a70a8" stroke-width="0.9"/>
    <circle cx="644.5" cy="174.5" r="5" fill="#5a7a2a" stroke="#9ccc40" stroke-width="1.2"/>
    <circle cx="660" cy="176" r="4.6" fill="#7aa832"/>
    <text x="660" y="178.6" font-size="6" font-family="Liberation Sans" text-anchor="middle" fill="#2a3a10">Y</text>
    <circle cx="670" cy="175" r="5" fill="#e0404e"/>
    <text x="670" y="177.6" font-size="6" font-family="Liberation Sans" text-anchor="middle" fill="#601018">X</text>
    <circle cx="652" cy="155.8" r="4.8" fill="#3a80d8"/>
    <text x="652" y="158.4" font-size="6" font-family="Liberation Sans" text-anchor="middle" fill="#0a2040">Z</text>
    <!-- nav buttons -->
    <circle cx="668.8" cy="208.8" r="8" fill="#2c2c2c"/>
    <circle cx="668.8" cy="226.3" r="8" fill="#2c2c2c"/>
    <circle cx="668.8" cy="245.5" r="8" fill="#2c2c2c"/>
    <circle cx="668.8" cy="263.8" r="8" fill="#2c2c2c"/>
    <g stroke="#ececec" fill="none" stroke-width="1.1">
      <circle cx="669.6" cy="208.2" r="3.6" stroke-width="1.2"/><path d="M666.9 210.9 L664.3 213.5" stroke-width="1.8" stroke-linecap="round"/><path d="M669.6 206.6 V209.8 M668 208.2 H671.2" stroke-width="0.9"/>
      <path d="M665.2 227 V222.5 Q665.2 221.5 666 221.5 Q666.8 221.5 666.8 222.5 V221 Q666.8 220 667.6 220 Q668.4 220 668.4 221 V220.5 Q668.4 219.5 669.2 219.5 Q670 219.5 670 220.5 V221.5 Q670 220.5 670.8 220.5 Q671.6 220.5 671.6 221.5 V226 L672.6 224.8 Q673.4 224 674 224.6 L671.5 229.5 Q670.5 231 668.5 231 H667.5 Q665.2 231 665.2 228 Z" fill="#ececec" stroke="none"/>
      <circle cx="667" cy="243.3" r="2" stroke-width="1"/><circle cx="671" cy="242.3" r="2" stroke-width="1"/><path d="M664.8 246 H671.5 V249.5 H664.8 Z M671.5 247 L673.8 245.8 V249.8 L671.5 248.6" fill="#ececec" stroke="none"/>
      <path d="M665.8 260 H672 L673.6 268 H664.2 Z" fill="#ececec" stroke="none"/><path d="M665 263.5 H673 M664.6 265.8 H673.3 M667 260 L666.5 268 M669 260 V268 M671 260 L671.5 268" stroke="#333" stroke-width="0.6"/>
    </g>
  </svg>

  <!-- N panel content -->
  <svg class="a" style="left:690px;top:150px" width="10" height="10" viewBox="0 0 10 10"><path d="M1.2 2.3 L3.6 4.7 L6 2.3" stroke="#d8d8d8" fill="none" stroke-width="1"/></svg>
  <div class="t" style="left:701px;top:148.8px;color:#e8e8e8">Transform</div>
  <svg class="a" style="left:788px;top:152px" width="9" height="4" viewBox="0 0 9 4"><g fill="#6a6a6a"><rect x="0" y="0" width="1.2" height="1.2"/><rect x="2" y="0" width="1.2" height="1.2"/><rect x="4" y="0" width="1.2" height="1.2"/><rect x="6" y="0" width="1.2" height="1.2"/><rect x="0" y="2.2" width="1.2" height="1.2"/><rect x="2" y="2.2" width="1.2" height="1.2"/><rect x="4" y="2.2" width="1.2" height="1.2"/><rect x="6" y="2.2" width="1.2" height="1.2"/></g></svg>
  <div class="t" style="left:693px;top:167.1px;color:#c8c8c8">Median:</div>
  <div class="a" style="left:693px;top:179px;width:100px;height:34.7px;background:#545454;border-radius:3px"></div>
  <div class="a" style="left:693px;top:189.9px;width:100px;height:0.8px;background:#3e3e3e"></div>
  <div class="a" style="left:693px;top:201.9px;width:100px;height:0.8px;background:#3e3e3e"></div>
  <div class="t" style="left:702px;top:179.4px;color:#e0e0e0">X</div>
  <div class="t" style="left:702px;top:190.8px;color:#e0e0e0">Y</div>
  <div class="t" style="left:702px;top:202.8px;color:#e0e0e0">Z</div>
  <div class="t" style="left:693px;top:179.4px;width:92px;text-align:right;color:#e0e0e0">0 m</div>
  <div class="t" style="left:693px;top:190.8px;width:92px;text-align:right;color:#e0e0e0">-0.43687 m</div>
  <div class="t" style="left:693px;top:202.8px;width:92px;text-align:right;color:#e0e0e0">0.25246 m</div>
  <div class="a" style="left:693px;top:216.2px;width:50px;height:11.3px;background:#545454;border-radius:3px 0 0 3px"></div>
  <div class="a" style="left:743px;top:216.2px;width:50px;height:11.3px;background:#4772b3;border-radius:0 3px 3px 0"></div>
  <div class="t" style="left:693px;top:217px;width:50px;text-align:center;color:#e0e0e0">Global</div>
  <div class="t" style="left:743px;top:217px;width:50px;text-align:center;color:#ffffff">Local</div>
  <div class="t" style="left:693px;top:229.4px;color:#c8c8c8">Vertices Data:</div>
  <div class="a" style="left:693px;top:242.8px;width:100px;height:10.6px;background:#545454;border-radius:3px"></div>
  <div class="a" style="left:693px;top:255.8px;width:100px;height:10.9px;background:#545454;border-radius:3px"></div>
  <div class="t" style="left:702px;top:243.2px;color:#e0e0e0">Mean Bevel Weight</div>
  <div class="t" style="left:693px;top:243.2px;width:92px;text-align:right;color:#e0e0e0">0.00</div>
  <div class="t" style="left:702px;top:256.4px;color:#e0e0e0">Mean Vertex Crease</div>
  <div class="t" style="left:693px;top:256.4px;width:92px;text-align:right;color:#e0e0e0">0.00</div>
  <div class="t" style="left:693px;top:269.3px;color:#c8c8c8">Edges Data:</div>
  <div class="a" style="left:693px;top:282.3px;width:100px;height:11px;background:#545454;border-radius:3px"></div>
  <div class="a" style="left:693px;top:295.3px;width:100px;height:11px;background:#545454;border-radius:3px"></div>
  <div class="t" style="left:702px;top:282.9px;color:#e0e0e0">Mean Bevel Weight</div>
  <div class="t" style="left:693px;top:282.9px;width:92px;text-align:right;color:#e0e0e0">0.00</div>
  <div class="t" style="left:702px;top:295.9px;color:#e0e0e0">Mean Crease</div>
  <div class="t" style="left:693px;top:295.9px;width:92px;text-align:right;color:#e0e0e0">0.00</div>
  <svg class="a" style="left:690px;top:317px" width="10" height="10" viewBox="0 0 10 10"><path d="M2.3 1 L4.8 3.5 L2.3 6" stroke="#d8d8d8" fill="none" stroke-width="1"/></svg>
  <div class="t" style="left:701px;top:315.4px;color:#e8e8e8">Properties</div>
  <svg class="a" style="left:788px;top:319px" width="9" height="4" viewBox="0 0 9 4"><g fill="#6a6a6a"><rect x="0" y="0" width="1.2" height="1.2"/><rect x="2" y="0" width="1.2" height="1.2"/><rect x="4" y="0" width="1.2" height="1.2"/><rect x="6" y="0" width="1.2" height="1.2"/><rect x="0" y="2.2" width="1.2" height="1.2"/><rect x="2" y="2.2" width="1.2" height="1.2"/><rect x="4" y="2.2" width="1.2" height="1.2"/><rect x="6" y="2.2" width="1.2" height="1.2"/></g></svg>

  <!-- N panel tabs -->
  <div class="a" style="left:804px;top:148.6px;width:11px;height:53px;background:#2a2a2a;border-radius:3px 0 0 3px;box-shadow:inset 0.8px 0 0 #3a3a3a,inset 0 0.8px 0 #3a3a3a,inset 0 -0.8px 0 #3a3a3a"></div>
  <div class="a" style="left:804px;top:204px;width:11px;height:23.5px;background:#303030;border-radius:3px 0 0 3px;box-shadow:inset 0.8px 0 0 #444,inset 0 0.8px 0 #444,inset 0 -0.8px 0 #444"></div>
  <div class="a" style="left:804px;top:229px;width:11px;height:24.5px;background:#2a2a2a;border-radius:3px 0 0 3px;box-shadow:inset 0.8px 0 0 #3a3a3a,inset 0 0.8px 0 #3a3a3a,inset 0 -0.8px 0 #3a3a3a"></div>
  <div class="a" style="left:804px;top:256.5px;width:11px;height:25px;background:#2a2a2a;border-radius:3px 0 0 3px;box-shadow:inset 0.8px 0 0 #3a3a3a,inset 0 0.8px 0 #3a3a3a,inset 0 -0.8px 0 #3a3a3a"></div>
  <div class="a" style="left:804px;top:284.7px;width:11px;height:52px;background:#2a2a2a;border-radius:3px 0 0 3px;box-shadow:inset 0.8px 0 0 #3a3a3a,inset 0 0.8px 0 #3a3a3a,inset 0 -0.8px 0 #3a3a3a"></div>
  <div class="a" style="left:804px;top:340.6px;width:11px;height:24px;background:#2a2a2a;border-radius:3px 0 0 3px;box-shadow:inset 0.8px 0 0 #3a3a3a,inset 0 0.8px 0 #3a3a3a,inset 0 -0.8px 0 #3a3a3a"></div>
  <div class="a" style="left:804px;top:368px;width:11px;height:34.5px;background:#2a2a2a;border-radius:3px 0 0 3px;box-shadow:inset 0.8px 0 0 #3a3a3a,inset 0 0.8px 0 #3a3a3a,inset 0 -0.8px 0 #3a3a3a"></div>
  <div class="a" style="left:804px;top:406px;width:11px;height:29px;background:#2a2a2a;border-radius:3px 0 0 3px;box-shadow:inset 0.8px 0 0 #3a3a3a,inset 0 0.8px 0 #3a3a3a,inset 0 -0.8px 0 #3a3a3a"></div>
  <div class="a" style="left:804px;top:438.5px;width:11px;height:31px;background:#2a2a2a;border-radius:3px 0 0 3px;box-shadow:inset 0.8px 0 0 #3a3a3a,inset 0 0.8px 0 #3a3a3a,inset 0 -0.8px 0 #3a3a3a"></div>
  <div class="a" style="left:804px;top:473px;width:11px;height:29px;background:#2a2a2a;border-radius:3px 0 0 3px;box-shadow:inset 0.8px 0 0 #3a3a3a,inset 0 0.8px 0 #3a3a3a,inset 0 -0.8px 0 #3a3a3a"></div>
  <div class="vt" style="left:804px;top:148.6px;width:11px;height:53px">Home Builder</div>
  <div class="vt" style="left:804px;top:204px;width:11px;height:23.5px;color:#fff">Item</div>
  <div class="vt" style="left:804px;top:229px;width:11px;height:24.5px">Tool</div>
  <div class="vt" style="left:804px;top:256.5px;width:11px;height:25px">View</div>
  <div class="vt" style="left:804px;top:284.7px;width:11px;height:52px">Building Tools</div>
  <div class="vt" style="left:804px;top:340.6px;width:11px;height:24px">Edit</div>
  <div class="vt" style="left:804px;top:368px;width:11px;height:34.5px">BlenderKit</div>
  <div class="vt" style="left:804px;top:406px;width:11px;height:29px">Rigify</div>
  <div class="vt" style="left:804px;top:438.5px;width:11px;height:31px">Object</div>
  <div class="vt" style="left:804px;top:473px;width:11px;height:29px">Tissue</div>

  <!-- outliner -->
  <div class="a" style="left:817px;top:113px;width:160px;height:147px;background:#2a2a2a"></div>
  <div class="a" style="left:817px;top:114px;width:160px;height:15px;background:#2a2a2a"></div>
  <!-- outliner content -->
  <div class="a" style="left:823.7px;top:116.6px;width:16.5px;height:11.4px;background:#222;border-radius:3px"></div>
  <svg class="a" style="left:824px;top:116.6px" width="16" height="12" viewBox="0 0 16 12">
    <rect x="1.5" y="1" width="3" height="2" fill="#ddd"/><path d="M3 3 V9.5 H5" stroke="#ccc" stroke-width="0.8" fill="none"/>
    <rect x="5" y="4.5" width="5" height="2" fill="#ddd"/><rect x="5" y="8" width="5" height="2" fill="#ddd"/>
    <path d="M11.5 5 L12.8 6.3 L14.1 5" stroke="#ddd" fill="none" stroke-width="0.9"/></svg>
  <div class="a" style="left:844.5px;top:116.6px;width:18.5px;height:11.4px;background:#222;border-radius:3px"></div>
  <svg class="a" style="left:845px;top:116.6px" width="18" height="12" viewBox="0 0 18 12">
    <rect x="1.5" y="3" width="7" height="7" fill="#777"/><rect x="3.5" y="1.5" width="7" height="7" fill="#aaa" stroke="#ddd" stroke-width="0.6"/><path d="M4.5 7 L6.5 4.5 L9 7 Z" fill="#eee"/>
    <path d="M12.5 5 L13.8 6.3 L15.1 5" stroke="#ddd" fill="none" stroke-width="0.9"/></svg>
  <div class="a" style="left:873.8px;top:116px;width:68.6px;height:11.7px;background:#1d1d1d;border-radius:3px"></div>
  <svg class="a" style="left:875px;top:116px" width="12" height="12" viewBox="0 0 12 12"><circle cx="6.5" cy="5" r="2.8" fill="none" stroke="#ddd" stroke-width="1.1"/><path d="M4.5 7 L2 9.8" stroke="#ddd" stroke-width="1.3"/></svg>
  <div class="t" style="left:888px;top:116.6px;color:#6a6a6a">Search</div>
  <div class="a" style="left:952px;top:116px;width:19px;height:12px;background:#222;border-radius:3px"></div>
  <svg class="a" style="left:952px;top:116px" width="19" height="12" viewBox="0 0 19 12"><path d="M1.5 2 H10 L6.5 6 V10.5 L5 9 V6 Z" fill="none" stroke="#ddd" stroke-width="1"/><path d="M12.5 5 L13.8 6.3 L15.1 5" stroke="#ddd" fill="none" stroke-width="0.9"/></svg>
  <!-- rows -->
  <div class="a" style="left:817px;top:166.6px;width:160px;height:12.5px;background:#334d80"></div>
  <div class="a" style="left:834.3px;top:155px;width:0.8px;height:60px;background:#3c3c3c"></div>
  <svg class="a" style="left:817px;top:128px" width="160" height="95" viewBox="817 128 160 95">
    <!-- scene collection icon -->
    <path d="M831 132 H839.5 V134.5 H831 Z" fill="#e8e8e8"/><path d="M831.5 135.5 H839 V140.5 H831.5 Z" fill="#e8e8e8"/><rect x="834.5" y="136.5" width="1.6" height="1.2" fill="#333"/>
    <!-- collection -->
    <path d="M832.5 146.5 L835 149 L837.5 146.5" stroke="#ccc" fill="none" stroke-width="0.9"/>
    <rect x="841.8" y="143" width="11.5" height="11" rx="1.5" fill="#404040"/>
    <path d="M843.5 144.5 H851.5 V146.5 H843.5 Z M844 147.5 H851 V152.5 H844 Z" fill="#e8e8e8"/><rect x="847" y="148.5" width="1.4" height="1.2" fill="#333"/>
    <!-- chevrons -->
    <path d="M846 158 L848.5 160.5 L846 163 M846 170.3 L848.5 172.8 L846 175.3 M846 182.5 L848.5 185 L846 187.5 M846 194.5 L848.5 197 L846 199.5 M846 206.5 L848.5 209 L846 211.5" stroke="#cfcfcf" fill="none" stroke-width="0.9"/>
    <!-- camera icon -->
    <circle cx="857.5" cy="158.2" r="1.9" fill="#dc8e52"/><circle cx="861" cy="158.5" r="1.7" fill="#dc8e52"/><rect x="856" y="160" width="6.5" height="4.5" rx="0.8" fill="#dc8e52"/><path d="M862.5 161 L864.5 160 V164.5 L862.5 163.5 Z" fill="#dc8e52"/>
    <!-- cube icon selected -->
    <rect x="854.5" y="167.2" width="10.5" height="11" rx="1.5" fill="#4a628c"/>
    <path d="M856 169 H863.5 L859.75 176.5 Z" fill="none" stroke="#e8a060" stroke-width="1.4" stroke-linejoin="round"/>
    <path d="M856 181.3 H863.5 L859.75 188.8 Z M856 193.3 H863.5 L859.75 200.8 Z" fill="none" stroke="#dc8e52" stroke-width="1.5" stroke-linejoin="round"/>
    <!-- light icon -->
    <circle cx="859.5" cy="208" r="3.3" fill="#dc8e52"/><rect x="858.3" y="211" width="2.4" height="2.3" fill="#dc8e52"/><circle cx="859.5" cy="208" r="1.1" fill="#7a4a20"/>
    <!-- left edit icon -->
    <rect x="821" y="169" width="7" height="7" fill="none" stroke="#8ab0e8" stroke-width="0.9" stroke-dasharray="1.4 1"/><circle cx="827" cy="169.5" r="1.7" fill="#e8eef8"/>
    <circle cx="822.9" cy="185.2" r="1.4" fill="#e8e8e8"/><circle cx="822.9" cy="197.2" r="1.4" fill="#e8e8e8"/>
    <!-- data icons -->
    <rect x="905.5" y="155" width="12.7" height="11" rx="2.5" fill="#3a5a50"/>
    <path d="M908 158 A2 2 0 1 1 912 158 M911 158 A2 2 0 1 1 915 158" stroke="#50a888" fill="none" stroke-width="1"/><rect x="908" y="159.5" width="6.5" height="4" rx="0.6" fill="none" stroke="#50a888" stroke-width="1"/>
    <rect x="898" y="167.2" width="10.7" height="11" rx="2" fill="#3a6a78"/>
    <path d="M900 169.5 H906.7 L903.3 176.5 Z" fill="none" stroke="#48c0b0" stroke-width="1.2" stroke-linejoin="round"/>
    <path d="M915.5 181.5 H923 L919.3 188.5 Z M915.5 193.8 H923 L919.3 200.8 Z" fill="none" stroke="#3a9c7a" stroke-width="1.4" stroke-linejoin="round"/><g fill="#3a9c7a"><circle cx="915.5" cy="181.5" r="1.3"/><circle cx="923" cy="181.5" r="1.3"/><circle cx="919.3" cy="188.5" r="1.3"/><circle cx="915.5" cy="193.8" r="1.3"/><circle cx="923" cy="193.8" r="1.3"/><circle cx="919.3" cy="200.8" r="1.3"/></g>
    <circle cx="919.2" cy="181.5" r="1" fill="#3a9c7a"/><circle cx="919.2" cy="193.8" r="1" fill="#3a9c7a"/>
    <circle cx="902.3" cy="209.5" r="3.3" fill="none" stroke="#3a9c7a" stroke-width="0.9"/><path d="M902.3 208 V211.5" stroke="#3a9c7a" stroke-width="0.9"/>
    <!-- checkbox -->
    <rect x="939.3" y="145.6" width="6.5" height="6.5" rx="1" fill="#f0f0f0"/><path d="M940.6 148.8 L942.2 150.4 L944.8 147" stroke="#222" stroke-width="1" fill="none"/>
  </svg>
  <svg class="a" style="left:947px;top:140px" width="28" height="80" viewBox="947 140 28 80">
   <g>
    <ellipse cx="954" cy="148.8" rx="4.2" ry="2.8" fill="none" stroke="#e0e0e0" stroke-width="1"/><circle cx="954" cy="148.8" r="1.3" fill="#e0e0e0"/>
    <path d="M962 146.5 H964 L964.8 145.3 H967.8 L968.6 146.5 H970.8 V152.5 H962 Z" fill="#e8e8e8"/><circle cx="966.4" cy="149.5" r="1.5" fill="#555"/>
   </g>
   <g transform="translate(0 11.6)">
    <ellipse cx="954" cy="148.8" rx="4.2" ry="2.8" fill="none" stroke="#e0e0e0" stroke-width="1"/><circle cx="954" cy="148.8" r="1.3" fill="#e0e0e0"/>
    <path d="M962 146.5 H964 L964.8 145.3 H967.8 L968.6 146.5 H970.8 V152.5 H962 Z" fill="#e8e8e8"/><circle cx="966.4" cy="149.5" r="1.5" fill="#555"/>
   </g>
   <g transform="translate(0 23.8)"><ellipse cx="954" cy="148.8" rx="4.2" ry="2.8" fill="none" stroke="#b0d0f8" stroke-width="1"/><circle cx="954" cy="148.8" r="1.3" fill="#b0d0f8"/><path d="M962 146.5 H964 L964.8 145.3 H967.8 L968.6 146.5 H970.8 V152.5 H962 Z" fill="#dde8f8"/><circle cx="966.4" cy="149.5" r="1.5" fill="#556"/></g>
   <g transform="translate(0 36)">
    <ellipse cx="954" cy="148.8" rx="4.2" ry="2.8" fill="none" stroke="#e0e0e0" stroke-width="1"/><circle cx="954" cy="148.8" r="1.3" fill="#e0e0e0"/>
    <path d="M962 146.5 H964 L964.8 145.3 H967.8 L968.6 146.5 H970.8 V152.5 H962 Z" fill="#e8e8e8"/><circle cx="966.4" cy="149.5" r="1.5" fill="#555"/>
   </g>
   <g transform="translate(0 48.4)">
    <ellipse cx="954" cy="148.8" rx="4.2" ry="2.8" fill="none" stroke="#e0e0e0" stroke-width="1"/><circle cx="954" cy="148.8" r="1.3" fill="#e0e0e0"/>
    <path d="M962 146.5 H964 L964.8 145.3 H967.8 L968.6 146.5 H970.8 V152.5 H962 Z" fill="#e8e8e8"/><circle cx="966.4" cy="149.5" r="1.5" fill="#555"/>
   </g>
   <g transform="translate(0 61)">
    <ellipse cx="954" cy="148.8" rx="4.2" ry="2.8" fill="none" stroke="#e0e0e0" stroke-width="1"/><circle cx="954" cy="148.8" r="1.3" fill="#e0e0e0"/>
    <path d="M962 146.5 H964 L964.8 145.3 H967.8 L968.6 146.5 H970.8 V152.5 H962 Z" fill="#e8e8e8"/><circle cx="966.4" cy="149.5" r="1.5" fill="#555"/>
   </g>
  </svg>
  <div class="t" style="left:844px;top:132.4px;color:#e0e0e0">Scene Collection</div>
  <div class="t" style="left:856px;top:144.5px;color:#e0e0e0">Collection</div>
  <div class="t" style="left:868px;top:156.4px;color:#e0e0e0">Camera</div>
  <div class="t" style="left:868px;top:168.8px;color:#b0c4e8">Cube</div>
  <div class="t" style="left:868px;top:180.8px;color:#e0e0e0">Cube.001</div>
  <div class="t" style="left:868px;top:192.9px;color:#e0e0e0">Cube.002</div>
  <div class="t" style="left:868px;top:205.4px;color:#e0e0e0">Light</div>

  <!-- properties -->
  <div class="a" style="left:817px;top:261px;width:160px;height:273px;background:#2e2e2e"></div>
  <div class="a" style="left:817px;top:261px;width:160px;height:15px;background:#2e2e2e"></div>
  <div class="a" style="left:817px;top:276px;width:17px;height:257px;background:#202020"></div>
  <!-- properties content -->
  <svg class="a" style="left:823px;top:263px" width="17" height="12" viewBox="0 0 17 12">
    <rect x="1" y="1.5" width="9" height="3.8" rx="1.9" fill="#e8e8e8"/><rect x="1" y="6.7" width="9" height="3.8" rx="1.9" fill="#e8e8e8"/><circle cx="3" cy="3.4" r="1.2" fill="#444"/><circle cx="8" cy="8.6" r="1.2" fill="#444"/>
    <path d="M12 5 L13.3 6.3 L14.6 5" stroke="#ddd" fill="none" stroke-width="0.9"/></svg>
  <div class="a" style="left:860.7px;top:263.8px;width:68px;height:9.5px;background:#1e1e1e;border-radius:3px"></div>
  <svg class="a" style="left:862px;top:263px" width="11" height="11" viewBox="0 0 11 11"><circle cx="6" cy="4.8" r="2.7" fill="none" stroke="#ddd" stroke-width="1.1"/><path d="M4.1 6.8 L1.8 9.4" stroke="#ddd" stroke-width="1.3"/></svg>
  <div class="t" style="left:876px;top:263.7px;color:#6a6a6a">Search</div>
  <div class="a" style="left:962.5px;top:264px;width:9.5px;height:10px;background:#232323;border-radius:2px"></div>
  <svg class="a" style="left:962.5px;top:264px" width="10" height="10" viewBox="0 0 10 10"><path d="M2.5 4 L5 6.5 L7.5 4" stroke="#ddd" fill="none" stroke-width="1"/></svg>
  <!-- tab icons column -->
  <div class="a" style="left:819.3px;top:515.6px;width:14.7px;height:17.4px;background:#3d3d3d;border-radius:3px 0 0 3px"></div>
  <svg class="a" style="left:817px;top:276px" width="17" height="257" viewBox="817 276 17 257">
    <g stroke="#d0d0d0" fill="none" stroke-width="1">
      <!-- tool -->
      <path d="M822.5 285 V290 M828.5 285.5 L828.5 294 M826 285.5 L828.5 288.5 L831 285.5" stroke-width="1.2"/><circle cx="822.5" cy="292.5" r="1.8" fill="#e0e0e0" stroke="none"/>
      <!-- render -->
      <path d="M820.5 307 H831 V314.5 H820.5 Z M823 307 V305 H828.5 V307" stroke-width="1.1"/>
      <!-- output -->
      <path d="M820.5 324 H831 V329 H820.5 Z M822.5 329 V331.5 H829 V329 M822.5 323.5 V321.5 H829 V323.5" stroke-width="1.1"/>
      <!-- view layer -->
      <path d="M821 346 L825 342 H830.5 V347.5 L826.5 350 H821 Z M825 342 V346 H821" stroke-width="1" fill="#888"/>
      <!-- scene -->
      <path d="M821 364.5 L823.5 358.5 L826 364.5 Z" fill="#e0e0e0" stroke="none"/><circle cx="828" cy="363" r="2.3"/><circle cx="829" cy="358.5" r="1.2" fill="#e0e0e0" stroke="none"/>
    </g>
    <!-- world -->
    <circle cx="826" cy="378.6" r="4.3" fill="#8a3040"/><path d="M822.5 376.5 C824 375.5 825.5 378.5 828 376.8 M823 380.5 C825 379.5 826.5 381.5 829.5 379.5" stroke="#c06070" stroke-width="0.9" fill="none"/>
    <!-- collection -->
    <path d="M821.5 396.3 H830.5 V398.6 H821.5 Z M822 399.6 H830 V404.6 H822 Z" fill="none" stroke="#d8d8d8" stroke-width="1"/><rect x="825.2" y="400.8" width="1.6" height="1.1" fill="#d8d8d8"/>
    <!-- object -->
    <rect x="822.6" y="418.1" width="7" height="7" rx="1.2" fill="#d88a55"/><g fill="#5a4030"><circle cx="822.6" cy="418.1" r="1"/><circle cx="829.6" cy="418.1" r="1"/><circle cx="822.6" cy="425.1" r="1"/><circle cx="829.6" cy="425.1" r="1"/></g>
    <!-- modifier wrench -->
    <path d="M822.3 442.3 L827.2 437.4" stroke="#6a94d8" stroke-width="1.9" stroke-linecap="round"/><path d="M826.2 435.2 A2.8 2.8 0 1 0 830.3 437.8 L828.6 437.6 L827.5 436.5 Z" fill="#6a94d8"/>
    <!-- particles -->
    <path d="M822.3 452 L829.5 459 M823 458.5 L828.5 452.5" stroke="#a8a8a8" stroke-width="0.8"/><circle cx="822.3" cy="452" r="1.1" fill="#c8c8c8"/><circle cx="829.5" cy="459" r="1.1" fill="#6a94d8"/><circle cx="828.5" cy="452.3" r="0.9" fill="#c8c8c8"/><circle cx="823" cy="458.5" r="0.9" fill="#c8c8c8"/>
    <!-- physics -->
    <path d="M829.6 470 A4.3 4.3 0 1 1 822 474.5" fill="none" stroke="#5a88d0" stroke-width="1.3"/><circle cx="826" cy="473.2" r="1.5" fill="#c8d0e0"/><circle cx="829.3" cy="470" r="1" fill="#c8d0e0"/>
    <!-- constraints -->
    <ellipse cx="826" cy="488.8" rx="4.6" ry="3.1" transform="rotate(-35 826 488.8)" fill="#3e5a98"/><ellipse cx="826" cy="488.8" rx="2.2" ry="1.3" transform="rotate(-35 826 488.8)" fill="#b0c0e0"/>
    <!-- data -->
    <path d="M821.8 501.3 H830.2 L826 508.6 Z" fill="none" stroke="#3cb088" stroke-width="1.4" stroke-linejoin="round"/><circle cx="826" cy="502" r="0.9" fill="#3cb088"/>
    <!-- material -->
    <circle cx="826" cy="523" r="4.3" fill="#c84a5a"/><path d="M826 523 L826 518.7 A4.3 4.3 0 0 1 830.3 523 Z" fill="#f0b8c0"/><path d="M826 523 L821.7 523 A4.3 4.3 0 0 0 826 527.3 Z" fill="#7a2030"/>
  </svg>
  <!-- breadcrumb -->
  <svg class="a" style="left:839px;top:281px" width="135" height="12" viewBox="839 281 135 12">
    <rect x="841" y="282.5" width="8" height="8" fill="none" stroke="#999" stroke-width="0.8" stroke-dasharray="1.2 1.2"/><rect x="842.5" y="284" width="5" height="5" fill="#e8e8e8"/>
    <path d="M881.5 284 L884.5 286.8 L881.5 289.6" stroke="#ccc" fill="none" stroke-width="0.9"/>
    <circle cx="895.5" cy="286.6" r="4.5" fill="#ececec"/><path d="M895.5 286.6 V282.77500000000003 A3.8249999999999997 3.8249999999999997 0 0 1 898.875 285.70000000000005 Z" fill="#111"/><path d="M892.8 287.27500000000003 L895.275 288.625" stroke="#222" stroke-width="1.1"/>
    <path d="M963.5 291 L966 288.5 M965 284 L970 289 M967 283 L971 287 L969 288 L966 285 Z" stroke="#9a9a9a" fill="none" stroke-width="0.9"/>
  </svg>
  <div class="t" style="left:854.2px;top:281.6px;color:#e0e0e0">Cube</div>
  <div class="t" style="left:904.7px;top:281.6px;color:#e0e0e0">Material.001</div>
  <!-- material list -->
  <div class="a" style="left:839.5px;top:304px;width:115.7px;height:70.5px;background:#232323;border-radius:3px"></div>
  <div class="a" style="left:842.4px;top:318.3px;width:110.6px;height:11.4px;background:#4772b3;border-radius:3px"></div>
  <svg class="a" style="left:842px;top:305px" width="14" height="28" viewBox="842 305 14 28">
    <defs><radialGradient id="rs" cx="0.4" cy="0.35" r="0.7"><stop offset="0" stop-color="#ff8070"/><stop offset="0.5" stop-color="#d02010"/><stop offset="1" stop-color="#600800"/></radialGradient>
    <radialGradient id="ys" cx="0.4" cy="0.35" r="0.7"><stop offset="0" stop-color="#f8f8e0"/><stop offset="0.6" stop-color="#c8c8a0"/><stop offset="1" stop-color="#707060"/></radialGradient></defs>
    <circle cx="848.3" cy="311.3" r="4.2" fill="url(#rs)"/>
    <circle cx="848.3" cy="324" r="4.2" fill="url(#ys)"/>
  </svg>
  <div class="t" style="left:857.1px;top:306.3px;color:#e0e0e0">Material</div>
  <div class="t" style="left:857.1px;top:319px;color:#f0f4ff">Material.001</div>
  <svg class="a" style="left:844px;top:365px" width="70" height="8" viewBox="844 365 70 8"><path d="M845 366.5 L849 369 L845 371.5 Z" fill="#bbb"/><path d="M900 368 H906 M900 369.6 H906" stroke="#777" stroke-width="0.7"/></svg>
  <div class="a" style="left:961.8px;top:303.3px;width:11px;height:23.4px;background:#3d3d3d;border-radius:3px"></div>
  <div class="a" style="left:961.8px;top:331.9px;width:11px;height:9.5px;background:#2a2a2a;border-radius:3px"></div>
  <div class="a" style="left:961.8px;top:346.7px;width:11px;height:23.3px;background:#3d3d3d;border-radius:3px"></div>
  <svg class="a" style="left:961.8px;top:303px" width="11" height="68" viewBox="961.8 303 11 68">
    <path d="M967.3 306 V312.5 M964 309.25 H970.5 M964 318.5 H970.5" stroke="#d8d8d8" stroke-width="1.1"/>
    <path d="M964.8 335 L967.3 337.5 L969.8 335" stroke="#d8d8d8" fill="none" stroke-width="1"/>
    <path d="M964.3 354.5 L967.3 351 L970.3 354.5 Z M964.3 361 L967.3 364.5 L970.3 361 Z" fill="#e0e0e0"/>
  </svg>
  <!-- slot row -->
  <svg class="a" style="left:841px;top:379px" width="17" height="11" viewBox="0 0 17 11"><circle cx="5.3" cy="5.5" r="4.5" fill="#ececec"/><path d="M5.3 5.5 V1.6750000000000003 A3.8249999999999997 3.8249999999999997 0 0 1 8.675 4.6 Z" fill="#111"/><path d="M2.6 6.175 L5.075 7.525" stroke="#222" stroke-width="1.1"/><path d="M12 4.5 L13.3 5.8 L14.6 4.5" stroke="#ddd" fill="none" stroke-width="0.9"/></svg>
  <div class="a" style="left:860px;top:379px;width:37.3px;height:10.2px;background:#1e1e1e;border-radius:3px 0 0 3px"></div>
  <div class="t" style="left:863px;top:379.3px;color:#e0e0e0">Material...</div>
  <div class="a" style="left:897.3px;top:379px;width:15.4px;height:10.2px;background:#383838"></div>
  <div class="t" style="left:902.3px;top:379.3px;color:#888">2</div>
  <div class="a" style="left:912.7px;top:379px;width:35.9px;height:10.2px;background:#424242;border-radius:0 3px 3px 0"></div>
  <svg class="a" style="left:912.7px;top:379px" width="36" height="11" viewBox="0 0 36 11">
    <path d="M3 2.5 C5 2.5 6 1.5 6.5 1.5 C7 1.5 8 2.5 10 2.5 V5.5 C10 8 7.5 9.5 6.5 9.8 C5.5 9.5 3 8 3 5.5 Z" fill="none" stroke="#9a9a9a" stroke-width="0.9"/>
    <path d="M15 3 H19.5 L21.5 5 V9.5 H15 Z M17 3 V1.5 H21 L23 3.5 V8" fill="none" stroke="#cfcfcf" stroke-width="0.9"/>
    <path d="M27.5 3 L32 7.5 M32 3 L27.5 7.5" stroke="#d8d8d8" stroke-width="1"/></svg>
  <svg class="a" style="left:956px;top:379px" width="17" height="11" viewBox="0 0 17 11"><path d="M1 1.5 H10 L6.5 5.5 V10 L4.5 8.5 V5.5 Z" fill="none" stroke="#e8e8e8" stroke-width="1.2" stroke-linejoin="round"/><path d="M3 2.5 H8 L5.5 5.5 Z" fill="#e8e8e8"/><path d="M12 4.5 L13.3 5.8 L14.6 4.5" stroke="#ddd" fill="none" stroke-width="0.9"/></svg>
  <!-- assign select deselect -->
  <div class="a" style="left:839px;top:393.3px;width:133.7px;height:11.7px;background:#474747;border-radius:3px"></div>
  <div class="a" style="left:839px;top:393.3px;width:43.7px;height:11.7px;background:#565656;border-radius:3px 0 0 3px"></div>
  <div class="a" style="left:882.7px;top:393.3px;width:0.8px;height:11.7px;background:#3a3a3a"></div>
  <div class="a" style="left:927.5px;top:393.3px;width:0.8px;height:11.7px;background:#3a3a3a"></div>
  <div class="t" style="left:839px;top:394.2px;width:43.7px;text-align:center;color:#e8e8e8">Assign</div>
  <div class="t" style="left:883px;top:394.2px;width:44.5px;text-align:center;color:#e0e0e0">Select</div>
  <div class="t" style="left:928px;top:394.2px;width:44.7px;text-align:center;color:#e0e0e0">Deselect</div>
  <svg class="a" style="left:865px;top:397px" width="8" height="12" viewBox="0 0 8 12"><path d="M1 1 L1 9.5 L3 7.8 L4.5 11 L6 10.3 L4.6 7.2 L7.2 7 Z" fill="#f0f0f0" stroke="#222" stroke-width="0.6"/></svg>
  <!-- preview/surface panels -->
  <div class="a" style="left:839.5px;top:411.6px;width:137px;height:14.6px;background:#383838;border-radius:3px 0 0 0"></div>
  <div class="a" style="left:839.5px;top:426.8px;width:137px;height:110px;background:#383838"></div>
  <div class="a" style="left:839.5px;top:426.2px;width:137px;height:0.6px;background:#2c2c2c"></div>
  <svg class="a" style="left:843px;top:415px" width="8" height="26" viewBox="0 0 8 26"><path d="M2.5 1.4 L5 3.9 L2.5 6.4" stroke="#d8d8d8" fill="none" stroke-width="1"/><path d="M1.5 17.5 L4 20 L6.5 17.5" stroke="#d8d8d8" fill="none" stroke-width="1"/></svg>
  <div class="t" style="left:852px;top:413.5px;color:#e8e8e8">Preview</div>
  <div class="t" style="left:852px;top:429.6px;color:#e8e8e8">Surface</div>
  <svg class="a" style="left:962px;top:417px" width="9" height="4" viewBox="0 0 9 4"><g fill="#6a6a6a"><rect x="0" y="0" width="1.2" height="1.2"/><rect x="2" y="0" width="1.2" height="1.2"/><rect x="4" y="0" width="1.2" height="1.2"/><rect x="6" y="0" width="1.2" height="1.2"/><rect x="0" y="2.2" width="1.2" height="1.2"/><rect x="2" y="2.2" width="1.2" height="1.2"/><rect x="4" y="2.2" width="1.2" height="1.2"/><rect x="6" y="2.2" width="1.2" height="1.2"/></g></svg>
  <svg class="a" style="left:962px;top:432.5px" width="9" height="4" viewBox="0 0 9 4"><g fill="#6a6a6a"><rect x="0" y="0" width="1.2" height="1.2"/><rect x="2" y="0" width="1.2" height="1.2"/><rect x="4" y="0" width="1.2" height="1.2"/><rect x="6" y="0" width="1.2" height="1.2"/><rect x="0" y="2.2" width="1.2" height="1.2"/><rect x="2" y="2.2" width="1.2" height="1.2"/><rect x="4" y="2.2" width="1.2" height="1.2"/><rect x="6" y="2.2" width="1.2" height="1.2"/></g></svg>
  <div class="a" style="left:843.9px;top:447.5px;width:124.5px;height:10.9px;background:#4772b3;border-radius:3px"></div>
  <svg class="a" style="left:845px;top:447.5px" width="12" height="11" viewBox="0 0 12 11"><rect x="1.5" y="1.5" width="5" height="3" rx="1" fill="#f0f0f0"/><rect x="1.5" y="6" width="5" height="3" rx="1" fill="#f0f0f0"/><path d="M6.5 3 C10 3 10 7.5 6.5 7.5" stroke="#f0f0f0" fill="none" stroke-width="1"/></svg>
  <div class="t" style="left:843.9px;top:448px;width:135px;text-align:center;color:#f4f4f4">Use Nodes</div>
  <div class="t" style="left:840px;top:469.1px;width:45.6px;text-align:right;color:#d8d8d8">Surface</div>
  <div class="a" style="left:892.2px;top:469.4px;width:63.7px;height:10.3px;background:#262626;border-radius:3px"></div>
  
  <div class="t" style="left:904.7px;top:469.6px;color:#e8e8e8">Principled BSDF</div>
  <div class="t" style="left:840px;top:490.8px;width:45.6px;text-align:right;color:#d8d8d8">Base Color</div>
  <div class="t" style="left:840px;top:505.8px;width:45.6px;text-align:right;color:#d8d8d8">Metallic</div>
  <div class="t" style="left:840px;top:520.8px;width:45.6px;text-align:right;color:#d8d8d8">Roughness</div>
  <div class="a" style="left:892.2px;top:490.4px;width:10.3px;height:11.6px;background:#262626;border-radius:3px 0 0 3px"></div>
  <div class="a" style="left:892.2px;top:505.7px;width:10.3px;height:11px;background:#262626;border-radius:3px 0 0 3px"></div>
  <div class="a" style="left:892.2px;top:521px;width:10.3px;height:10.4px;background:#262626;border-radius:3px 0 0 3px"></div>
  
  
  
  <div class="a" style="left:903.2px;top:490px;width:53px;height:12px;background:#e3e37a;border-radius:3px;box-shadow:0 0 0 0.6px #222"></div>
  <div class="a" style="left:903.2px;top:505.7px;width:53px;height:11px;background:#4a4a4a;border-radius:3px"></div>
  <div class="a" style="left:903.2px;top:521px;width:53px;height:10.4px;background:#4a4a4a;border-radius:3px"></div>
  <div class="a" style="left:903.2px;top:521px;width:15.4px;height:10.4px;background:#4772b3;border-radius:3px 0 0 3px"></div>
  <div class="t" style="left:903.2px;top:506.2px;width:53px;text-align:center;color:#e0e0e0">0.000</div>
  <div class="t" style="left:919.6px;top:521.2px;color:#e0e0e0">0.307</div>
  
  
  

<svg class="a" style="left:890px;top:468px" width="80" height="66" viewBox="890 468 80 66">
    <circle cx="897.6" cy="474.6" r="2" fill="#78c878"/>
    <circle cx="897.6" cy="496.2" r="2.1" fill="#cdd070"/>
    <circle cx="897.6" cy="511.3" r="2.1" fill="#c4c4c4"/>
    <circle cx="897.6" cy="526.3" r="2.1" fill="#c4c4c4"/>
    <circle cx="962.5" cy="496.2" r="1.5" fill="#f0f0f0"/>
    <circle cx="962.5" cy="511.3" r="1.5" fill="#f0f0f0"/>
    <circle cx="962.5" cy="526.3" r="1.5" fill="#f0f0f0"/>
  </svg>
<div class="a" style="left:47px;top:531.6px;width:931px;height:2px;background:rgba(18,38,46,.85)"></div>
<div class="a" style="left:976px;top:105px;width:1.2px;height:430px;background:rgba(18,38,46,.7)"></div>
</div></div>
</body></html>
